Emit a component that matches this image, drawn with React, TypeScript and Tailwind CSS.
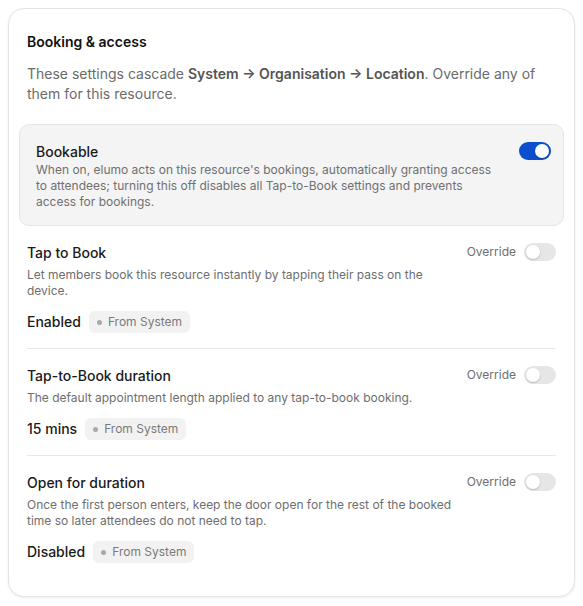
import { useState } from 'react';

type Setting = {
  title: string;
  description: string;
  value: string;
  source: string;
};

const settings: Setting[] = [
  {
    title: 'Tap to Book',
    description: 'Let members book this resource instantly by tapping their pass on the device.',
    value: 'Enabled',
    source: 'From System',
  },
  {
    title: 'Tap-to-Book duration',
    description: 'The default appointment length applied to any tap-to-book booking.',
    value: '15 mins',
    source: 'From System',
  },
  {
    title: 'Open for duration',
    description:
      'Once the first person enters, keep the door open for the rest of the booked time so later attendees do not need to tap.',
    value: 'Disabled',
    source: 'From System',
  },
];

function Toggle({ on, onChange }: { on: boolean; onChange: (v: boolean) => void }) {
  return (
    <button
      type="button"
      role="switch"
      aria-checked={on}
      onClick={() => onChange(!on)}
      className={`relative inline-flex h-[18px] w-8 shrink-0 items-center rounded-full transition-colors ${
        on ? 'bg-[#0b4fcf]' : 'bg-[#e6e6e6]'
      }`}
    >
      <span
        className={`absolute top-[2px] h-[14px] w-[14px] rounded-full bg-white shadow-[0_1px_2px_rgba(0,0,0,0.2)] transition-transform ${
          on ? 'translate-x-[16px]' : 'translate-x-[2px]'
        }`}
      />
    </button>
  );
}

function SettingRow({ setting }: { setting: Setting }) {
  const [override, setOverride] = useState(false);

  return (
    <div className="pt-[17px] pb-[15px]">
      <div className="flex items-start justify-between gap-2">
        <div className="min-w-0 max-w-[432px]">
          <div className="text-[14px] leading-5 font-medium text-[#1a1a1a]">{setting.title}</div>
          <p className="mt-1 text-[12px] leading-4 text-[#6e6e6e]">{setting.description}</p>
        </div>
        <div className="flex shrink-0 items-center gap-2">
          <span className="text-[12px] leading-4 text-[#6e6e6e]">Override</span>
          <Toggle on={override} onChange={setOverride} />
        </div>
      </div>
      <div className="mt-3 flex items-center gap-2">
        <span className="text-[14px] leading-5 font-medium text-[#1a1a1a]">{setting.value}</span>
        <span className="inline-flex h-[22px] items-center gap-[6px] rounded-md bg-[#f2f2f2] px-2 text-[12px] text-[#7a7a7a]">
          <span className="h-[5px] w-[5px] rounded-full bg-[#a8a8a8]" />
          {setting.source}
        </span>
      </div>
    </div>
  );
}

export default function App() {
  const [bookable, setBookable] = useState(true);

  return (
    <div className="min-h-screen bg-white p-2 font-['Inter','Liberation_Sans',sans-serif] antialiased">
      <div className="rounded-2xl border border-[#e4e4e4] bg-white px-[18px] pt-[23px] pb-[18px] shadow-[0_1px_3px_rgba(0,0,0,0.08)]">
        <h2 className="text-[14px] leading-5 font-semibold text-[#111]">Booking &amp; access</h2>
        <p className="mt-3 text-[14px] leading-5 text-[#6b6b6b]">
          These settings cascade <strong className="font-semibold text-[#555]">System → Organisation → Location</strong>. Override any of
          them for this resource.
        </p>

        <div className="-mx-2 mt-5 flex items-start justify-between gap-4 rounded-[10px] border border-[#e6e6e6] bg-[#f4f4f4] pl-4 pr-3 pt-[17px] pb-[15px]">
          <div className="max-w-[470px]">
            <div className="text-[14px] leading-5 font-medium text-[#1a1a1a]">Bookable</div>
            <p className="text-[12px] leading-4 text-[#707070]">
              When on, elumo acts on this resource's bookings, automatically granting access to attendees; turning this off
              disables all Tap-to-Book settings and prevents access for bookings.
            </p>
          </div>
          <Toggle on={bookable} onChange={setBookable} />
        </div>

        <div className="divide-y divide-[#e8e8e8]">
          {settings.map((s) => (
            <SettingRow key={s.title} setting={s} />
          ))}
        </div>
      </div>
    </div>
  );
}
